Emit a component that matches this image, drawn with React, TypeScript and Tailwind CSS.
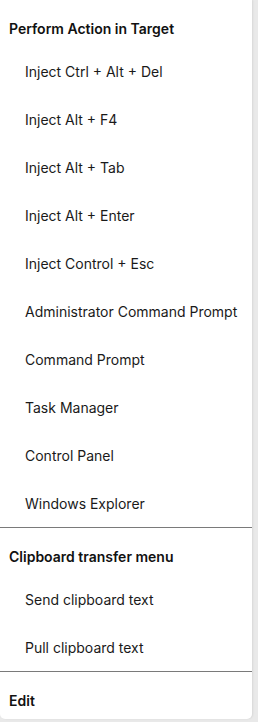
const sections = [
  {
    title: "Perform Action in Target",
    items: [
      "Inject Ctrl + Alt + Del",
      "Inject Alt + F4",
      "Inject Alt + Tab",
      "Inject Alt + Enter",
      "Inject Control + Esc",
      "Administrator Command Prompt",
      "Command Prompt",
      "Task Manager",
      "Control Panel",
      "Windows Explorer",
    ],
  },
  {
    title: "Clipboard transfer menu",
    items: ["Send clipboard text", "Pull clipboard text"],
  },
  { title: "Edit", items: [] as string[] },
];

export default function App() {
  return (
    <div
      className="h-[722px] w-[258px] bg-[#e9e9e9]"
      style={{ fontFamily: "Inter, 'Noto Sans', sans-serif" }}
    >
      <div className="w-[252px] rounded-b-[5px] bg-white shadow-[1px_0_2px_rgba(0,0,0,0.08)]">
        {sections.map((s, i) => (
          <div key={s.title} className={i > 0 ? "border-t border-[#7a7a7a]" : ""}>
            <div className="flex h-[37px] items-center px-[9px] pt-[10px] box-content text-[14px] font-semibold text-[#111]">
              {s.title}
            </div>
            {s.items.map((item) => (
              <div
                key={item}
                className="flex h-12 items-center pl-[25px] text-[14px] text-[#1a1a1a]"
              >
                {item}
              </div>
            ))}
          </div>
        ))}
      </div>
    </div>
  );
}
